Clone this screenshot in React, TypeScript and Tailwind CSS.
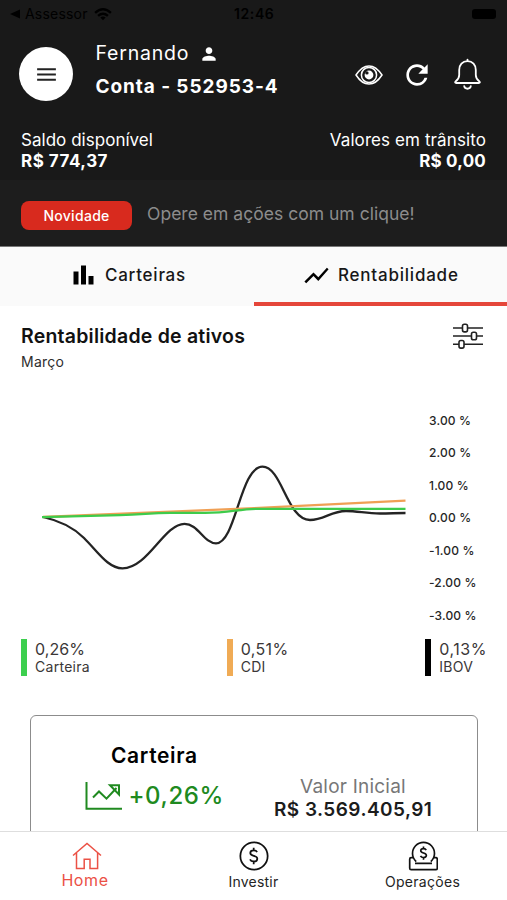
import React from "react";
import { MdMenu, MdPerson, MdRefresh, MdShowChart } from "react-icons/md";

const ticks = ["3.00 %", "2.00 %", "1.00 %", "0.00 %", "-1.00 %", "-2.00 %", "-3.00 %"];

function StatusBar() {
  return (
    <div className="flex h-[28px] items-center pl-[10px] pr-[11px] text-[14px] leading-none text-black">
      <div className="flex w-[224px] items-center">
        <svg width="10" height="10" viewBox="0 0 10 10">
          <path d="M0 5 10 0.5v9z" />
        </svg>
        <span className="ml-[5px] tracking-[0.2px]">Assessor</span>
        <svg className="ml-[6px]" width="18" height="13" viewBox="0 0 19 14" fill="none" stroke="black" strokeWidth="2.6">
          <path d="M1 5.2Q9.5-2.4 18 5.2M4.2 8.4Q9.5 3.8 14.8 8.4" />
          <path d="M6.6 10.3Q9.5 8 12.4 10.3L9.5 13.3z" fill="black" stroke="none" />
        </svg>
      </div>
      <span className="font-semibold tracking-[0.6px]">12:46</span>
      <span className="ml-auto h-[10px] w-[24px] rounded-[3px] bg-black" />
    </div>
  );
}

function EyeIcon() {
  return (
    <svg width="28" height="22" viewBox="0 0 28 22" fill="none" stroke="white" strokeWidth="1.5">
      <path d="M1 11C5 4.8 9.2 1.9 14 1.9S23 4.8 27 11C23 17.2 18.8 20.1 14 20.1S5 17.2 1 11z" />
      <circle cx="14" cy="11" r="7.6" />
      <circle cx="14" cy="11" r="4.4" fill="white" stroke="none" />
      <circle cx="11.9" cy="8.9" r="1.7" fill="#191919" stroke="none" />
    </svg>
  );
}

function BellIcon() {
  return (
    <svg width="29" height="33" viewBox="0 0 29 33" fill="none" stroke="white" strokeWidth="1.8" strokeLinecap="round" strokeLinejoin="round">
      <path d="M14.5 1.6v1.5M14.5 3.2C9.4 3.2 6.2 7 6.2 12v5c0 3.300-1.300 4.700-3.400 6.300-1.200 1-.8 1.700.5 1.700h22.400c1.300 0 1.700-.7.5-1.700-2.100-1.600-3.400-3-3.400-6.300v-5c0-5-3.200-8.800-8.300-8.800z" />
      <path d="M11.200 28.200c.6 3.400 6 3.400 6.600 0" />
    </svg>
  );
}

function Header() {
  return (
    <header className="h-[180px] bg-[#191919] text-white">
      <StatusBar />
      <div className="flex h-[102px] pl-[19px] pr-[25px]">
        <button className="mt-[19px] flex h-[54px] w-[54px] items-center justify-center rounded-full bg-white text-[#222]">
          <MdMenu size={25} />
        </button>
        <div className="ml-[22.5px] pt-[13px]">
          <div className="flex h-[25px] items-center">
            <span className="text-[19.5px] tracking-[0.8px]">Fernando</span>
            <MdPerson size={20} className="ml-[10px]" />
          </div>
          <div className="mt-[7px] h-[27px] whitespace-nowrap text-[19px] font-bold leading-[27px] tracking-[0.92px]">Conta - 552953-4</div>
        </div>
        <div className="ml-auto flex h-[93px] items-center">
          <EyeIcon />
          <MdRefresh size={32} className="ml-[18px]" />
          <span className="ml-[20px]"><BellIcon /></span>
        </div>
      </div>
      <div className="flex justify-between pl-[21px] pr-[21px] text-[17px] leading-[20.5px]">
        <div>
          <div className="tracking-[0.03px]">Saldo disponível</div>
          <div className="text-[17px] font-bold tracking-[0.5px]">R$ 774,37</div>
        </div>
        <div className="text-right">
          <div className="tracking-[0.1px]">Valores em trânsito</div>
          <div className="text-[17px] font-bold tracking-[0.2px]">R$ 0,00</div>
        </div>
      </div>
    </header>
  );
}

function Tabs() {
  return (
    <div className="flex h-[59px] bg-[#fafafa] text-[17px] font-medium text-[#171717]">
      <div className="flex w-[254px] items-start pl-[73px] pt-[18px]">
        <svg width="21" height="20" viewBox="0 0 21 20">
          <path d="M.5 6.5h5v13h-5zM8 .5h5v19H8zM15.500 11h5v8.500h-5z" fill="black" />
        </svg>
        <span className="ml-[11px] leading-[20px] tracking-[0.750px]">Carteiras</span>
      </div>
      <div className="flex flex-1 items-start border-b-4 border-[#e5463a] pl-[48px] pt-[18px]">
        <MdShowChart size={29} className="-mt-[4px] text-black" />
        <span className="ml-[7px] leading-[20px] tracking-[0.780px]">Rentabilidade</span>
      </div>
    </div>
  );
}

function SlidersIcon() {
  return (
    <svg width="30" height="28" viewBox="0 0 30 28" fill="none" stroke="#222" strokeWidth="1.6">
      <path d="M0 6h9.500M14.500 6H30M0 14h18.500M23.500 14H30M0 22.300h6M11 22.300H30" />
      <rect x="9.500" y="2.300" width="5" height="7.600" rx="1.800" />
      <rect x="18.500" y="10.200" width="5" height="7.600" rx="1.800" />
      <rect x="6" y="18.500" width="5" height="7.600" rx="1.800" />
    </svg>
  );
}

function Chart() {
  return (
    <div className="flex h-[228px]">
      <svg width="429" height="228" viewBox="0 404 429 228" fill="none" strokeWidth="2.300">
        <path stroke="#242424" d="M43 517C59 520.500 72 526 84 538C98 552 108 568.300 122.500 568.300C148 568.300 164 523.800 184.500 523.800C198 523.800 204 543.300 216 543.300C236 543.300 240 466.700 262.500 466.700C282 466.700 287 520 310 520C324 520 331 511 346 511C358 511 366 513.500 380 513.500C390 513.500 396 513 405.500 513" />
        <path stroke="#f0a055" d="M43 517L254 508.200L405.500 500.600" />
        <path stroke="#3ecb4b" d="M42 517.200L120 515.200C145 514.500 150 512.900 170 512.900H205C230 512.900 238 509 258 508.800H405.500" />
      </svg>
      <div className="flex flex-col pt-[0.500px] text-[12px] font-medium leading-[32.600px] tracking-[0.150px] text-[#262626]">
        {ticks.map((t) => (
          <span key={t}>{t}</span>
        ))}
      </div>
    </div>
  );
}

function Legend({ color, value, name, spacing }: { color: string; value: string; name: string; spacing: string }) {
  return (
    <div className="flex h-[37px]">
      <span className={`w-[6px] ${color}`} />
      <div className="ml-[8px] text-[#3b3737]">
        <div className={`h-[19px] text-[16px] leading-[20px] ${spacing}`}>{value}</div>
        <div className="text-[14px] leading-[18px] tracking-[0.280px]">{name}</div>
      </div>
    </div>
  );
}

function GrowthIcon() {
  return (
    <svg width="38" height="30" viewBox="0 0 38 30" fill="none" stroke="#208a20" strokeWidth="2">
      <path d="M1.500 1v26.800H37" />
      <path d="M8 16.500l6-6 7.500 7.200L31.500 7" />
      <path d="M25 4.200h9v9.300z" />
    </svg>
  );
}

function DollarMark() {
  return (
    <path d="M17.500 10.800c-.6-1.200-1.800-1.700-3.200-1.700-1.900 0-3.400 1-3.400 2.500 0 3.500 6.800 1.900 6.800 5.500 0 1.600-1.500 2.700-3.500 2.700-1.700 0-3-.7-3.600-2M14.200 6.500v2.600M14.200 19.800v2.700" />
  );
}

function BottomNav() {
  return (
    <nav className="flex h-[69px] shrink-0 border-t border-[#dedede] bg-white text-[14px] text-[#242424]">
      <div className="flex w-[170px] flex-col items-center pt-[10px] text-[#eb5145]">
        <svg className="ml-[4px]" width="30" height="28" viewBox="0 0 30 28" fill="none" stroke="currentColor" strokeWidth="1.500">
          <path d="M1 13.500L15 1.500 29 13.500M4.500 11v15.500h7.700v-9.200h5.800v9.200h7.600V11" />
        </svg>
        <span className="text-[16px] leading-[21px] tracking-[0.600px]">Home</span>
      </div>
      <div className="flex w-[167px] flex-col items-center pt-[9px]">
        <svg width="30" height="30" viewBox="0 0 29 29" fill="none" stroke="#111" strokeWidth="1.700">
          <circle cx="14.500" cy="14.500" r="13.200" />
          <DollarMark />
        </svg>
        <span className="leading-[22px] tracking-[0.200px]">Investir</span>
      </div>
      <div className="flex w-[170px] flex-col items-center pl-px pt-[9px]">
        <svg width="30" height="30" viewBox="0 0 30 30" fill="none" stroke="#111" strokeWidth="1.700">
          <path d="M8.200 20.600A11 11 0 1 1 22.800 20.600" />
          <path d="M5 16.700H3.200q-1.500 0-1.500 1.500v9q0 1.500 1.500 1.500h24.600q1.500 0 1.500-1.500v-9q0-1.500-1.500-1.500H26M7 22.400h17" />
          <g transform="translate(3.700 .1) scale(.83)" strokeWidth="2"><DollarMark /></g>
        </svg>
        <span className="leading-[22px] tracking-[0.300px]">Operações</span>
      </div>
    </nav>
  );
}

export default function App() {
  return (
    <div className="flex h-[900px] w-[507px] flex-col overflow-hidden bg-white font-['Inter',sans-serif]">
      <Header />
      <div className="flex h-[67px] shrink-0 items-center border-b border-[#777] bg-[#1d1d1d] pl-[21px]">
        <span className="mt-[4px] flex h-[29px] w-[111px] items-center justify-center rounded-[8px] bg-[#d82a1e] text-[14px] font-medium tracking-[0.300px] text-white">Novidade</span>
        <span className="ml-[15px] mt-[2px] text-[17.500px] tracking-[0.020px] text-[#8c8c8c]">Opere em ações com um clique!</span>
      </div>
      <Tabs />
      <main className="min-h-0 flex-1 overflow-hidden">
        <div className="flex h-[98px] justify-between pl-[21px] pr-[24px] pt-[16px]">
          <div>
            <h1 className="text-[19.500px] font-semibold leading-[29px] tracking-[0.220px] text-[#111]">Rentabilidade de ativos</h1>
            <p className="text-[14px] leading-[22px] tracking-[0.250px] text-[#2d2d2d]">Março</p>
          </div>
          <SlidersIcon />
        </div>
        <Chart />
        <div className="mt-[7px] flex justify-between pl-[21px] pr-[20px]">
          <Legend color="bg-[#3ccf4e]" value="0,26%" name="Carteira" spacing="tracking-[0.080px]" />
          <Legend color="bg-[#f0ab55]" value="0,51%" name="CDI" spacing="tracking-[0.350px]" />
          <Legend color="bg-black" value="0,13%" name="IBOV" spacing="tracking-[0.550px]" />
        </div>
        <section className="ml-[30px] mt-[39px] flex h-[180px] w-[448px] rounded-[6px] border-[1.500px] border-[#8c8c8c]">
          <div className="w-[243px] pt-[26px]">
            <h2 className="pl-[80px] text-[21px] font-semibold leading-[28px] tracking-[0.650px] text-black">Carteira</h2>
            <div className="mt-[11px] flex items-center pl-[53.500px] text-[24px] font-medium leading-[30px] text-[#208a20]">
              <GrowthIcon />
              <span className="ml-[6px] tracking-[0.600px]">+0,26%</span>
            </div>
          </div>
          <div className="w-[158px] whitespace-nowrap pt-[59px] text-center">
            <div className="text-[19px] leading-[24px] tracking-[0.220px] text-[#777]">Valor Inicial</div>
            <div className="text-[19px] font-semibold leading-[22px] tracking-[0.450px] text-[#1c1c1c]">R$ 3.569.405,91</div>
          </div>
        </section>
      </main>
      <BottomNav />
    </div>
  );
}
